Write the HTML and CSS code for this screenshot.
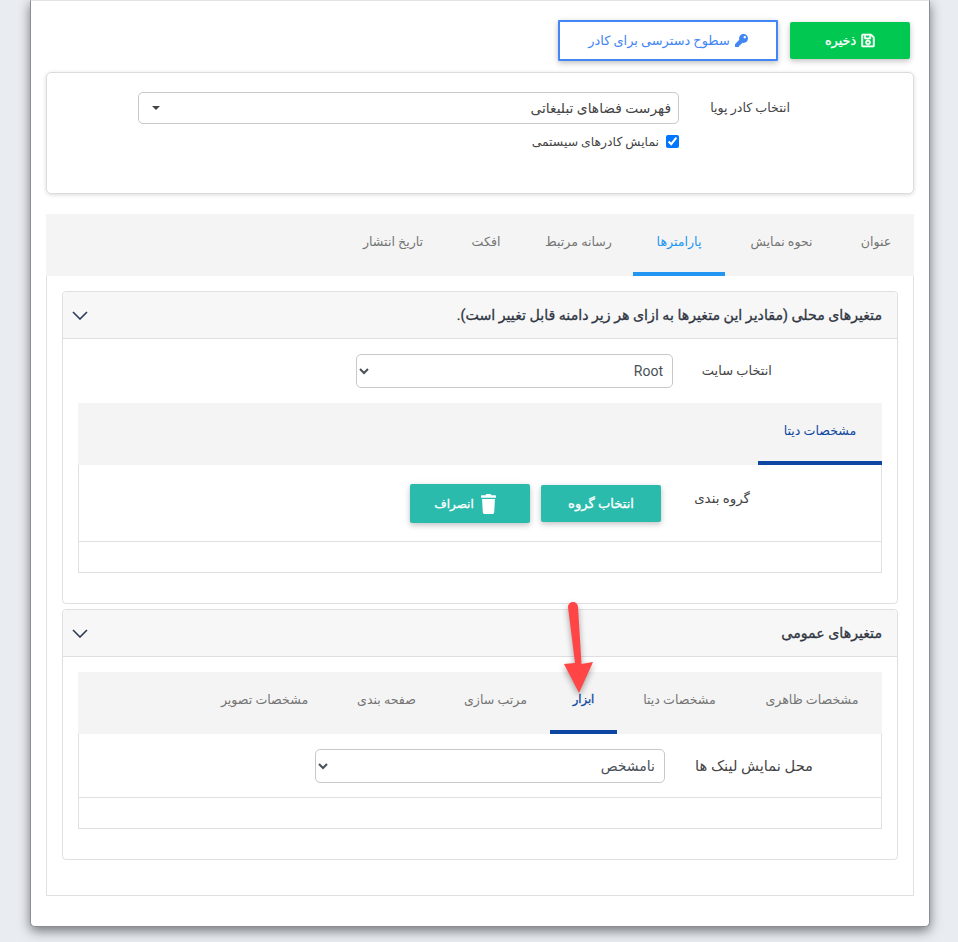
FILE: index.html
```html
<!DOCTYPE html>
<html lang="fa" dir="rtl">
<head>
<meta charset="utf-8">
<title>کادر پویا</title>
<link rel="stylesheet" href="styles.css">
</head>
<body>
<main class="window">
  <div class="toolbar">
    <button class="btn btn-save" type="button">
      <svg class="icon icon-save" viewBox="0 0 448 512"><path fill="currentColor" stroke="currentColor" stroke-width="18" d="M433.941 129.941l-83.882-83.882A48 48 0 0 0 316.118 32H48C21.49 32 0 53.49 0 80v352c0 26.51 21.49 48 48 48h352c26.51 0 48-21.49 48-48V163.882a48 48 0 0 0-14.059-33.941zM272 80v80H144V80h128zm122 352H54a6 6 0 0 1-6-6V86a6 6 0 0 1 6-6h42v104c0 13.255 10.745 24 24 24h176c13.255 0 24-10.745 24-24V83.882l78.243 78.243a6 6 0 0 1 1.757 4.243V426a6 6 0 0 1-6 6zM224 232c-48.523 0-88 39.477-88 88s39.477 88 88 88 88-39.477 88-88-39.477-88-88-88zm0 128c-22.056 0-40-17.944-40-40s17.944-40 40-40 40 17.944 40 40-17.944 40-40 40z"/></svg>
      ذخیره
    </button>
    <button class="btn btn-access" type="button">
      <svg class="icon" viewBox="0 0 512 512"><path fill="currentColor" d="M512 176.001C512 273.203 433.202 352 336 352c-11.22 0-22.19-1.062-32.827-3.069l-24.012 27.014A23.999 23.999 0 0 1 261.223 384H224v40c0 13.255-10.745 24-24 24h-40v40c0 13.255-10.745 24-24 24H24c-13.255 0-24-10.745-24-24v-78.059c0-6.365 2.529-12.47 7.029-16.971l161.802-161.802C163.108 213.814 160 195.271 160 176 160 78.798 238.797.001 335.999 0 433.488-.001 512 78.511 512 176.001zM336 128c0 26.51 21.49 48 48 48s48-21.49 48-48-21.49-48-48-48-48 21.49-48 48z"/></svg>
      سطوح دسترسی برای کادر
    </button>
  </div>

  <section class="picker-card">
    <div class="picker-row">
      <label class="picker-label">انتخاب کادر پویا</label>
      <div class="picker-field">
        <div class="fake-select">
          <span>فهرست فضاهای تبلیغاتی</span>
          <span class="caret"></span>
        </div>
        <label class="check-row"><input type="checkbox" checked><span>نمایش کادرهای سیستمی</span></label>
      </div>
    </div>
  </section>

  <nav class="tabs tabs-main">
    <a class="tab">عنوان</a>
    <a class="tab">نحوه نمایش</a>
    <a class="tab tab-active">پارامترها</a>
    <a class="tab">رسانه مرتبط</a>
    <a class="tab">افکت</a>
    <a class="tab">تاریخ انتشار</a>
  </nav>

  <div class="tab-pane">
    <section class="accordion accordion-local">
      <header class="accordion-head">
        <h3>متغیرهای محلی (مقادیر این متغیرها به ازای هر زیر دامنه قابل تغییر است).</h3>
        <svg class="chevron" viewBox="0 0 16 9"><path d="M1 1l7 7 7-7" fill="none" stroke="#2b3a55" stroke-width="1.6"/></svg>
      </header>
      <div class="accordion-body">
        <div class="site-row">
          <label class="site-label">انتخاب سایت</label>
          <select class="select select-site"><option>Root</option></select>
        </div>
        <nav class="tabs tabs-data">
          <a class="tab tab-active-dark">مشخصات دیتا</a>
        </nav>
        <div class="inner-pane">
          <div class="group-row">
            <label class="group-label">گروه بندی</label>
            <button class="btn btn-teal" type="button">انتخاب گروه</button>
            <button class="btn btn-teal btn-tall" type="button">
              <svg class="icon-trash" viewBox="0 0 448 512" preserveAspectRatio="none"><path fill="currentColor" d="M432 32H312l-9.4-18.7A24 24 0 0 0 281.1 0H166.8a23.72 23.72 0 0 0-21.4 13.3L136 32H16A16 16 0 0 0 0 48v32a16 16 0 0 0 16 16h416a16 16 0 0 0 16-16V48a16 16 0 0 0-16-16zM53.2 467a48 48 0 0 0 47.9 45h245.8a48 48 0 0 0 47.9-45L416 128H32z"/></svg>
              انصراف
            </button>
          </div>
          <div class="pane-foot"></div>
        </div>
      </div>
    </section>

    <section class="accordion accordion-general">
      <header class="accordion-head">
        <h3>متغیرهای عمومی</h3>
        <svg class="chevron" viewBox="0 0 16 9"><path d="M1 1l7 7 7-7" fill="none" stroke="#2b3a55" stroke-width="1.6"/></svg>
      </header>
      <div class="accordion-body">
        <nav class="tabs tabs-general">
          <a class="tab">مشخصات ظاهری</a>
          <a class="tab">مشخصات دیتا</a>
          <a class="tab tab-active-dark tab-strong">ابزار</a>
          <a class="tab">مرتب سازی</a>
          <a class="tab">صفحه بندی</a>
          <a class="tab">مشخصات تصویر</a>
        </nav>
        <div class="inner-pane">
          <div class="link-row">
            <label class="link-label">محل نمایش لینک ها</label>
            <select class="select select-link"><option>نامشخص</option></select>
          </div>
          <div class="pane-foot"></div>
        </div>
      </div>
    </section>
  </div>

  <svg class="arrow" viewBox="0 0 40 100" width="40" height="100"><path fill="#ff4545" d="M9 6a5 5 0 0 1 10 0l3.5 57 11.5-2-14 31-15-29 11-1z"/></svg>
</main>
</body>
</html>
```

FILE: styles.css
```css
* { box-sizing: border-box; }
html, body { margin: 0; padding: 0; height: 942px; overflow: hidden; }
body {
  background: #e9edf2;
  font-family: Roboto, "DejaVu Sans", sans-serif;
  font-size: 12px;
  color: #444;
}
.window {
  position: relative;
  margin-right: 28px;
  width: 900px;
  height: 927px;
  padding: 19px 15px 0 15px;
  background: #fff;
  border-top: 1px solid #e3e3e3;
  border-left: 1px solid #8b8d92;
  border-right: 1px solid #8b8d92;
  border-bottom: 1px solid #8b8d92;
  border-radius: 0 0 5px 5px;
  box-shadow: 0 4px 12px rgba(0,0,0,.5);
}
.toolbar {
  display: flex;
  align-items: center;
  gap: 12px;
  height: 41px;
  margin-bottom: 11px;
  padding-right: 4px;
}
.btn {
  display: inline-flex;
  align-items: center;
  justify-content: center;
  gap: 5px;
  border: 0;
  border-radius: 2px;
  font: inherit;
  font-size: 12.8px;
  -webkit-text-stroke: .3px currentColor;
  color: #fff;
  box-shadow: 0 2px 5px rgba(0,0,0,.16), 0 2px 8px rgba(0,0,0,.1);
}
.btn-save { width: 120px; height: 37px; background: #00c851; }
.btn-access {
  width: 220px;
  height: 41px;
  background: #fff;
  border: 2px solid #4285f4;
  color: #4285f4;
  font-size: 12.9px;
  -webkit-text-stroke: 0;
  border-radius: 1px;
}
.icon { width: 13px; height: 13px; }
.icon-save { width: 14px; height: 15px; }
.icon-trash { flex: none; width: 15px; height: 20px; }
.picker-card {
  height: 122px;
  padding: 19px 123px 0 0;
  border: 1px solid #dcdcdc;
  border-radius: 5px;
  box-shadow: 0 1px 4px rgba(0,0,0,.15);
}
.picker-row { display: flex; }
.picker-label { width: 111px; padding-top: 8px; font-size: 12.6px; color: #444; }
.picker-field { width: 541px; }
.fake-select {
  display: flex;
  justify-content: space-between;
  align-items: center;
  height: 32px;
  padding: 0 7px 0 13px;
  border: 1px solid #c8c8c8;
  border-radius: 5px;
  font-size: 13.8px;
}
.caret {
  width: 0;
  height: 0;
  border: 4px solid transparent;
  border-top-color: #444;
  border-bottom: 0;
}
.check-row { display: flex; align-items: center; gap: 7px; margin-top: 10px; font-size: 12.4px; }
.check-row input { width: 13px; height: 13px; margin: 0; }
.tabs {
  display: grid;
  height: 62px;
  background: #f4f4f4;
}
.tabs-main { margin-top: 20px; grid-template-columns: 76px 113px 92px 109px 76px 110px; }
.tabs-data { grid-template-columns: 124px; }
.tabs-general { grid-template-columns: 140px 125px 67px 109px 109px 135px; }
.tab {
  display: flex;
  align-items: center;
  justify-content: center;
  padding-bottom: 8px;
  font-size: 12.6px;
  color: #757575;
  white-space: nowrap;
}
.tab-active { color: #2196f3; border-bottom: 4px solid #2196f3; padding-bottom: 4px; }
.tab-active-dark { color: #0d47a1; border-bottom: 4px solid #0d47a1; padding-bottom: 4px; }
.tab-strong { font-size: 11.6px; -webkit-text-stroke: .3px currentColor; }
.tab-pane {
  height: 620px;
  padding: 15px 15px 0;
  border: 1px solid #e0e0e0;
  border-top: 0;
}
.accordion {
  border: 1px solid #dfdfdf;
  border-radius: 4px;
}
.accordion-local { height: 313px; }
.accordion-general { height: 251px; margin-top: 5px; }
.accordion-head {
  display: flex;
  justify-content: space-between;
  align-items: center;
  height: 47px;
  padding: 0 15px 0 9px;
  background: #f7f7f7;
  border-bottom: 1px solid #dfdfdf;
  border-radius: 4px 4px 0 0;
}
.accordion-head h3 {
  margin: 0;
  font-size: 14.2px;
  font-weight: 400;
  -webkit-text-stroke: .3px currentColor;
  color: #2f3542;
}
.chevron { width: 16px; height: 9px; }
.accordion-body { padding: 15px 15px 0; }
.site-row { display: flex; align-items: center; height: 34px; margin-bottom: 15px; }
.site-label { width: 209px; padding-right: 110px; padding-bottom: 2px; white-space: nowrap; font-size: 13px; }
.select {
  height: 34px;
  padding: 0 5px;
  background: #fff;
  border: 1px solid #c8c8c8;
  border-radius: 5px;
  font-family: inherit;
  font-size: 14px;
  color: #495057;
}
.select-site { width: 317px; }
.select-link { width: 350px; }
.inner-pane {
  border: 1px solid #e0e0e0;
  border-top: 0;
}
.group-row { display: flex; align-items: center; height: 76px; padding-top: 1px; }
.group-label { width: 220px; padding-right: 131px; padding-bottom: 10px; font-size: 13.4px; white-space: nowrap; }
.btn-teal { width: 120px; height: 37px; background: #2bbbad; font-size: 13.1px; }
.btn-tall { height: 39px; margin-right: 11px; gap: 7px; padding-right: 16px; font-size: 12px; }
.pane-foot { height: 31px; border-top: 1px solid #e0e0e0; }
.link-row { display: flex; align-items: center; height: 63px; }
.link-label { width: 216px; padding-right: 68px; white-space: nowrap; font-size: 14.7px; }
.arrow {
  position: absolute;
  left: 528px;
  top: 600px;
  filter: drop-shadow(0 3px 3px rgba(0,0,0,.35));
}
```
